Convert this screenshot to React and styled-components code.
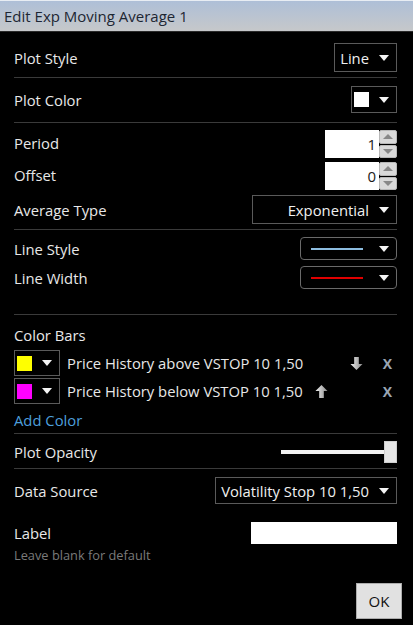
import styled, { createGlobalStyle } from 'styled-components';

const Global = createGlobalStyle`
  html, body {
    margin: 0;
    padding: 0;
    background: #000;
  }
  body {
    font-family: "Segoe UI", "Open Sans", "Noto Sans", sans-serif;
    font-size: 14px;
    color: #e6e6e6;
  }
`;

const Dialog = styled.div`
  width: 413px;
  height: 625px;
  background: #000;
  display: flex;
  flex-direction: column;
  overflow: hidden;
`;

const TitleBar = styled.div`
  box-sizing: border-box;
  height: 32px;
  display: flex;
  align-items: center;
  padding-left: 4px;
  background: linear-gradient(#aebfd7, #c6c8ca);
  border-top: 1px solid #e8edf3;
  border-bottom: 1px solid #2a2a2a;
  color: #1d2633;
  font-size: 15px;
`;

const Body = styled.div`
  padding: 0 16px 0 14px;
  display: flex;
  flex-direction: column;
`;

const Row = styled.div`
  display: flex;
  align-items: center;
  justify-content: space-between;
  height: ${(p) => p.$h}px;
  margin-top: ${(p) => p.$mt || 0}px;
`;

const Label = styled.span`
  font-size: 14.8px;
  color: #e8e8e8;
  white-space: nowrap;
  margin-top: ${(p) => (p.$lift ? -3 : 0)}px;
`;

const Sep = styled.div`
  height: 1px;
  background: #3a3a3a;
  margin-top: ${(p) => p.$mt}px;
`;

const Select = styled.div`
  box-sizing: border-box;
  height: 100%;
  width: ${(p) => p.$w}px;
  flex-shrink: 0;
  border: 1px solid ${(p) => (p.$round ? '#6a6a6a' : '#5a5a5a')};
  border-radius: ${(p) => (p.$round ? 4 : 0)}px;
  display: flex;
  align-items: center;
  justify-content: flex-end;
  gap: 10px;
  padding: 0 7px 0 6px;
  color: #f0f0f0;
  font-size: 14.8px;
  white-space: nowrap;
  overflow: hidden;
`;

const Caret = styled.span`
  width: 0;
  height: 0;
  border-left: 5px solid transparent;
  border-right: 5px solid transparent;
  border-top: 6px solid #f4f4f4;
  flex-shrink: 0;
`;

const Swatch = styled.span`
  width: 15px;
  height: 15px;
  flex-shrink: 0;
  background: ${(p) => p.$c};
  margin-right: auto;
  margin-left: -4px;
`;

const Stroke = styled.span`
  height: 2px;
  width: 52px;
  background: ${(p) => p.$c};
  margin-right: auto;
  margin-left: 4px;
`;

const Spin = styled.div`
  display: flex;
  height: 100%;
`;

const NumInput = styled.div`
  width: 54px;
  background: #fff;
  color: #1a1a1a;
  font-size: 15px;
  display: flex;
  align-items: center;
  justify-content: flex-end;
  padding-right: 3px;
  box-sizing: border-box;
`;

const SpinBtns = styled.div`
  width: 18px;
  display: flex;
  flex-direction: column;
  gap: 1px;
  background: #000;
`;

const SpinBtn = styled.div`
  flex: 1;
  background: #d9d9d9;
  border: 1px solid #b8b8b8;
  border-radius: 2px;
  display: flex;
  align-items: center;
  justify-content: center;
  &::after {
    content: '';
    border-left: 5px solid transparent;
    border-right: 5px solid transparent;
    ${(p) => (p.$up ? 'border-bottom' : 'border-top')}: 5px solid #888;
  }
`;

const BarRow = styled.div`
  display: flex;
  align-items: center;
  height: 26px;
  margin-top: ${(p) => p.$mt}px;
`;

const BarText = styled.span`
  margin-left: 7px;
  font-size: 14.8px;
  color: #e8e8e8;
  white-space: nowrap;
`;

const IconSlot = styled.span`
  width: 14px;
  display: flex;
  justify-content: center;
  margin-left: ${(p) => p.$ml}px;
  visibility: ${(p) => (p.$hidden ? 'hidden' : 'visible')};
`;

const Remove = styled.span`
  margin-left: auto;
  margin-right: 5px;
  color: #9aa6b4;
  font-weight: 700;
  font-size: 14px;
`;

const AddLink = styled.span`
  color: #4d9fdc;
  font-size: 14.8px;
  margin-top: 6px;
  line-height: 20px;
`;

const Slider = styled.div`
  width: 116px;
  height: 100%;
  display: flex;
  align-items: center;
`;

const Track = styled.div`
  flex: 1;
  height: 4px;
  background: #f2f2f2;
`;

const Thumb = styled.div`
  width: 13px;
  height: 22px;
  background: #e6e6e6;
  border: 1px solid #cfcfcf;
  box-sizing: border-box;
`;

const TextInput = styled.div`
  width: 146px;
  height: 100%;
  background: #fff;
`;

const Hint = styled.div`
  font-size: 12.8px;
  color: #7a7a7a;
  margin-top: 2px;
  line-height: 18px;
`;

const Footer = styled.div`
  display: flex;
  justify-content: flex-end;
  margin-top: 19px;
  margin-right: -5px;
`;

const OkButton = styled.button`
  width: 46px;
  height: 36px;
  background: #e1e1e1;
  border: 1px solid #adadad;
  color: #111;
  font-family: inherit;
  font-size: 15px;
  padding: 0;
`;

function BlockArrow({ up }) {
  const id = up ? 'gu' : 'gd';
  return (
    <svg width="13" height="13" viewBox="0 0 13 14">
      <defs>
        <linearGradient id={id} x1="0" x2="1" y1="0" y2="0">
          <stop offset="0" stopColor="#eeeeee" />
          <stop offset="1" stopColor="#8a8a8a" />
        </linearGradient>
      </defs>
      <path
        d={up ? 'M6.5 0 L13 6.5 L9 6.5 L9 14 L4 14 L4 6.5 L0 6.5 Z' : 'M4 0 L9 0 L9 7.5 L13 7.5 L6.5 14 L0 7.5 L4 7.5 Z'}
        fill={`url(#${id})`}
      />
    </svg>
  );
}

function Spinner({ value }) {
  return (
    <Spin>
      <NumInput>{value}</NumInput>
      <SpinBtns>
        <SpinBtn $up />
        <SpinBtn />
      </SpinBtns>
    </Spin>
  );
}

function ColorBar({ color, text, canUp, canDown, mt }) {
  return (
    <BarRow $mt={mt}>
      <Select $w={46}>
        <Swatch $c={color} />
        <Caret />
      </Select>
      <BarText>{text}</BarText>
      <IconSlot $ml={12} $hidden={!canUp}>
        <BlockArrow up />
      </IconSlot>
      <IconSlot $ml={20} $hidden={!canDown}>
        <BlockArrow />
      </IconSlot>
      <Remove>X</Remove>
    </BarRow>
  );
}

export default function App() {
  return (
    <Dialog>
      <Global />
      <TitleBar>Edit Exp Moving Average 1</TitleBar>
      <Body>
        <Row $h={29} $mt={11}>
          <Label>Plot Style</Label>
          <Select $w={63}>
            Line <Caret />
          </Select>
        </Row>
        <Sep $mt={5} />
        <Row $h={27} $mt={8}>
          <Label>Plot Color</Label>
          <Select $w={46}>
            <Swatch $c="#fff" />
            <Caret />
          </Select>
        </Row>
        <Sep $mt={9} />
        <Row $h={28} $mt={7}>
          <Label $lift>Period</Label>
          <Spinner value="1" />
        </Row>
        <Row $h={28} $mt={4}>
          <Label $lift>Offset</Label>
          <Spinner value="0" />
        </Row>
        <Row $h={29} $mt={5}>
          <Label>Average Type</Label>
          <Select $w={145}>
            Exponential <Caret />
          </Select>
        </Row>
        <Sep $mt={5} />
        <Row $h={23} $mt={7}>
          <Label>Line Style</Label>
          <Select $w={97} $round>
            <Stroke $c="#8dbde0" />
            <Caret />
          </Select>
        </Row>
        <Row $h={23} $mt={6}>
          <Label>Line Width</Label>
          <Select $w={97} $round>
            <Stroke $c="#e00000" />
            <Caret />
          </Select>
        </Row>
        <Sep $mt={25} />
        <Row $h={20} $mt={10}>
          <Label>Color Bars</Label>
        </Row>
        <ColorBar mt={5} color="#ffff00" text="Price History above VSTOP 10 1,50" canDown />
        <ColorBar mt={2} color="#ff00ff" text="Price History below VSTOP 10 1,50" canUp />
        <AddLink>Add Color</AddLink>
        <Sep $mt={3} />
        <Row $h={22} $mt={7}>
          <Label>Plot Opacity</Label>
          <Slider>
            <Track />
            <Thumb />
          </Slider>
        </Row>
        <Sep $mt={5} />
        <Row $h={27} $mt={8}>
          <Label>Data Source</Label>
          <Select $w={182}>
            Volatility Stop 10 1,50 <Caret />
          </Select>
        </Row>
        <Row $h={22} $mt={18}>
          <Label>Label</Label>
          <TextInput />
        </Row>
        <Hint>Leave blank for default</Hint>
        <Footer>
          <OkButton>OK</OkButton>
        </Footer>
      </Body>
    </Dialog>
  );
}
